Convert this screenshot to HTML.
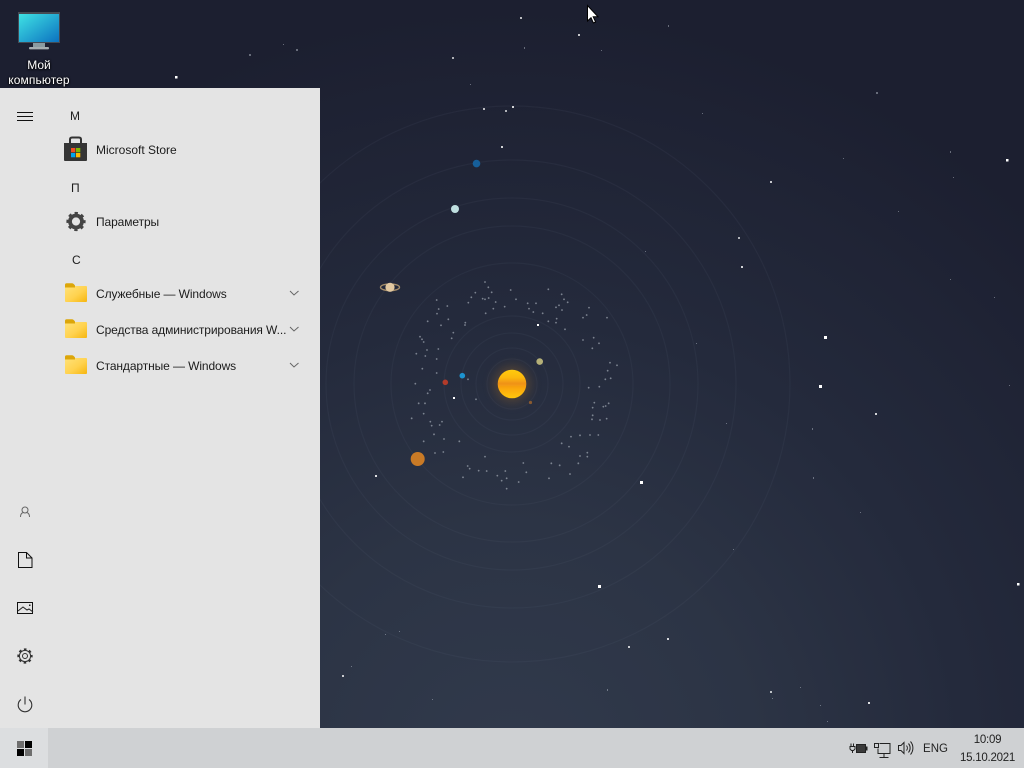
<!DOCTYPE html>
<html><head><meta charset="utf-8"><title>Desktop</title>
<style>
html,body{margin:0;padding:0;width:1024px;height:768px;overflow:hidden;background:#1e2233}
body{position:relative;font-family:"Liberation Sans","Noto Sans CJK SC",sans-serif;font-size:12px;color:#1a1a1a}
.bg{position:absolute;left:0;top:0}
.dt{position:absolute;left:0;width:78px;text-align:center;color:#fff;font-size:12px;line-height:15px;text-shadow:0 0 2px #000,0 1px 2px #000}
.panel{position:absolute;left:0;top:88px;width:320px;height:640px;background:#e4e4e4}
.t{position:absolute;white-space:nowrap;line-height:16px;color:#1c1c1c}
.c{letter-spacing:-.1px}
.abs{position:absolute;left:0;top:0}
.taskbar{position:absolute;left:0;top:728px;width:1024px;height:40px;background:#cfd1d3}
.start{position:absolute;left:0;top:0;width:48px;height:40px;background:#dcdee0}
.s{font-size:11.5px;letter-spacing:-.25px;color:#222}
</style></head><body>
<svg class="bg" width="1024" height="768" viewBox="0 0 1024 768">
<defs>
<radialGradient id="sky" gradientUnits="userSpaceOnUse" cx="512" cy="768" r="760">
<stop offset="0" stop-color="#313a4c"/><stop offset=".32" stop-color="#2c3445"/><stop offset=".6" stop-color="#242a3c"/><stop offset="1" stop-color="#1c1f30"/>
</radialGradient>
<radialGradient id="sun" cx=".5" cy=".5" r=".5"><stop offset="0" stop-color="#f08a10" stop-opacity=".4"/><stop offset=".55" stop-color="#c07a20" stop-opacity=".16"/><stop offset="1" stop-color="#2a3040" stop-opacity="0"/></radialGradient>
<linearGradient id="sb" x1="0" y1="0" x2="0" y2="1"><stop offset="0" stop-color="#ffcb12"/><stop offset=".28" stop-color="#fcb80e"/><stop offset=".48" stop-color="#ef9216"/><stop offset=".68" stop-color="#fbaa0c"/><stop offset="1" stop-color="#ffc70c"/></linearGradient>
<linearGradient id="scr" x1="0" y1="0" x2="1" y2="1"><stop offset="0" stop-color="#3fe2e4"/><stop offset="1" stop-color="#0c72c0"/></linearGradient>
<linearGradient id="fold" x1="0" y1="0" x2="1" y2="1"><stop offset="0" stop-color="#ffe27a"/><stop offset=".55" stop-color="#ffd24f"/><stop offset="1" stop-color="#f6b60f"/></linearGradient>
<filter id="b1" x="-5%" y="-5%" width="110%" height="110%"><feGaussianBlur stdDeviation=".35"/></filter>
<filter id="b2" x="-5%" y="-5%" width="110%" height="110%"><feGaussianBlur stdDeviation=".9"/></filter>
</defs>
<rect width="1024" height="768" fill="url(#sky)"/>
<g fill="none" stroke="#6a7790" stroke-opacity=".09" stroke-width="1.200">
<circle cx="512" cy="384" r="25"/><circle cx="512" cy="384" r="36"/><circle cx="512" cy="384" r="51"/><circle cx="512" cy="384" r="68"/><circle cx="512" cy="384" r="121"/><circle cx="512" cy="384" r="158"/><circle cx="512" cy="384" r="186"/><circle cx="512" cy="384" r="224"/><circle cx="512" cy="384" r="278"/>
</g>
<!-- belt -->
<g transform="translate(370 270) scale(.33333)" fill="none" stroke="#c3cad4" stroke-opacity=".55" stroke-width="5.500" stroke-linecap="round" filter="url(#b2)">
<path d="M345 36h0M355 52h0M365 67h0M316 68h0M304 82h0M338 86h0M345 88h0M356 84h0M295 98h0M377 96h0M404 110h0M370 116h0M347 130h0M232 108h0M206 117h0M201 131h0M200 90h0M235 148h0M173 154h0M213 166h0M286 158h0M285 165h0M250 188h0M245 205h0M150 200h0M156 208h0M161 216h0M205 237h0M171 240h0M139 251h0M166 258h0M200 267h0M157 296h0M200 309h0M136 341h0M173 370h0M180 360h0M146 400h0M165 400h0M161 431h0M125 445h0M181 455h0M216 455h0M209 465h0M185 467h0M192 493h0M161 514h0M222 507h0M268 514h0M195 549h0M220 546h0M345 560h0M293 588h0M299 596h0M326 602h0M350 603h0M279 622h0M382 617h0M406 603h0M410 625h0M395 632h0M446 636h0M410 656h0M469 607h0M460 579h0M544 580h0M569 586h0M537 625h0M600 612h0M625 580h0M630 558h0M652 548h0M652 560h0M575 520h0M597 530h0M603 500h0M630 496h0M660 495h0M685 495h0M710 446h0M690 450h0M666 448h0M668 436h0M668 413h0M673 398h0M700 410h0M707 408h0M716 400h0M656 353h0M688 350h0M722 325h0M706 328h0M741 286h0M720 278h0M713 302h0M687 220h0M671 203h0M667 235h0M639 210h0M711 143h0M657 113h0M650 135h0M639 143h0M593 97h0M582 88h0M575 73h0M567 106h0M558 112h0M576 120h0M560 146h0M558 158h0M535 154h0M585 178h0M535 58h0M473 100h0M477 116h0M490 126h0M498 100h0M518 130h0M422 60h0M438 88h0M294 328h0M318 388h0"/>
</g>
<!-- bright stars -->
<g fill="#fff" filter="url(#b1)">
<rect x="175" y="76" width="2.500" height="2.500"/><rect x="520" y="17" width="2" height="2" opacity=".7"/><rect x="578" y="34" width="2" height="2" opacity=".75"/><rect x="452" y="57" width="2" height="2" opacity=".65"/><rect x="483" y="108" width="2" height="2" opacity=".7"/><rect x="505" y="110" width="2" height="2" opacity=".65"/><rect x="512" y="106" width="2" height="2" opacity=".8"/><rect x="501" y="146" width="2" height="2" opacity=".8"/>
<rect x="1006" y="159" width="2.500" height="2.500"/><rect x="770" y="181" width="2" height="2" opacity=".75"/><rect x="738" y="237" width="2" height="2" opacity=".65"/><rect x="741" y="266" width="2" height="2" opacity=".8"/><rect x="824" y="336" width="3" height="3"/><rect x="819" y="385" width="3" height="3"/><rect x="875" y="413" width="2" height="2" opacity=".8"/><rect x="640" y="481" width="3" height="3"/><rect x="375" y="475" width="2" height="2" opacity=".85"/><rect x="598" y="585" width="3" height="3"/><rect x="628" y="646" width="2" height="2" opacity=".75"/><rect x="667" y="638" width="2" height="2" opacity=".8"/><rect x="342" y="675" width="2" height="2" opacity=".75"/><rect x="770" y="691" width="2" height="2" opacity=".7"/><rect x="868" y="702" width="2" height="2" opacity=".85"/><rect x="1017" y="583" width="2.500" height="2.500"/><rect x="537" y="324" width="2" height="2"/><rect x="453" y="397" width="2" height="2"/>
</g>
<g fill="#c4cad4" opacity=".45">
<rect x="283" y="44" width="1" height="1"/><rect x="296" y="49" width="2" height="2"/><rect x="249" y="54" width="2" height="2"/><rect x="524" y="47" width="1" height="2"/><rect x="601" y="50" width="1" height="1"/><rect x="668" y="25" width="1" height="2"/><rect x="470" y="84" width="1" height="1"/><rect x="702" y="113" width="1" height="1"/><rect x="876" y="92" width="2" height="2"/><rect x="843" y="158" width="1" height="1"/><rect x="950" y="151" width="1" height="2"/><rect x="953" y="177" width="1" height="1"/><rect x="898" y="211" width="1" height="1"/><rect x="950" y="279" width="1" height="1"/><rect x="994" y="297" width="1" height="1"/><rect x="812" y="428" width="1" height="2"/><rect x="813" y="477" width="1" height="2"/><rect x="860" y="512" width="1" height="1"/><rect x="726" y="423" width="1" height="1"/><rect x="1009" y="385" width="1" height="1"/><rect x="607" y="689" width="1" height="2"/><rect x="432" y="699" width="1" height="1"/><rect x="351" y="666" width="1" height="1"/><rect x="385" y="634" width="1" height="1"/><rect x="399" y="631" width="1" height="1"/><rect x="772" y="698" width="1" height="1"/><rect x="800" y="687" width="1" height="1"/><rect x="820" y="705" width="1" height="1"/><rect x="827" y="721" width="1" height="1"/><rect x="696" y="343" width="1" height="1"/><rect x="645" y="251" width="1" height="1"/><rect x="733" y="549" width="1" height="1"/></g>
<!-- planets -->
<circle cx="512" cy="384" r="30" fill="url(#sun)"/>
<circle cx="512" cy="384" r="14.300" fill="url(#sb)" filter="url(#b1)"/>
<circle cx="530.500" cy="402.500" r="1.600" fill="#8a5a30"/>
<circle cx="539.700" cy="361.600" r="3.300" fill="#b5b078" filter="url(#b1)"/>
<circle cx="462.300" cy="375.700" r="2.800" fill="#1e93cf" filter="url(#b1)"/>
<circle cx="445.300" cy="382.300" r="2.800" fill="#b23a2c" filter="url(#b1)"/>
<circle cx="417.700" cy="459" r="7" fill="#c97a28" filter="url(#b1)"/>
<ellipse cx="390" cy="287.300" rx="9.500" ry="3.400" fill="none" stroke="#a58d6a" stroke-width="1.400" filter="url(#b1)"/>
<circle cx="390" cy="287.300" r="4.600" fill="#e2c8a0" filter="url(#b1)"/>
<circle cx="455" cy="209" r="4" fill="#bfdfe0" filter="url(#b1)"/>
<circle cx="476.500" cy="163.600" r="3.800" fill="#145f9a" filter="url(#b1)"/>
</svg>

<!-- desktop icon -->
<svg class="abs" width="78" height="56">
<rect x="33" y="43" width="12" height="5" fill="#8a9aa0"/>
<rect x="29" y="47" width="20" height="2.400" rx="1" fill="#a5adb0"/>
<rect x="18" y="12" width="42" height="31" fill="#454b54"/>
<rect x="19" y="14" width="40" height="28" fill="url(#scr)"/>
</svg>
<div class="dt" style="top:58px">Мой</div>
<div class="dt" style="top:73px;letter-spacing:.1px">компьютер</div>

<div class="panel"></div>
<div class="t" style="left:70px;top:108px">М</div>
<div class="t" style="left:71px;top:180px">П</div>
<div class="t" style="left:72px;top:252px">С</div>
<div class="t" style="left:96px;top:142px">Microsoft Store</div>
<div class="t c" style="left:96px;top:214px">Параметры</div>
<div class="t c" style="left:96px;top:286px">Служебные — Windows</div>
<div class="t c" style="left:96px;top:322px">Средства администрирования W...</div>
<div class="t c" style="left:96px;top:358px">Стандартные — Windows</div>

<svg class="abs" width="320" height="728">
<!-- hamburger -->
<path d="M17 112.500h16M17 116.500h16M17 120.500h16" stroke="#111" stroke-width="1" fill="none"/>
<!-- store -->
<path d="M70 144v-4.500q0-2 2-2h7q2 0 2 2v4.500" fill="none" stroke="#333" stroke-width="2"/>
<path d="M64 143h23v17q0 1-1 1h-21q-1 0-1-1z" fill="#353535"/>
<rect x="71" y="148" width="4.300" height="4.300" fill="#f25022"/><rect x="76" y="148" width="4.300" height="4.300" fill="#7fba00"/><rect x="71" y="153" width="4.300" height="4.300" fill="#00a4ef"/><rect x="76" y="153" width="4.300" height="4.300" fill="#ffb900"/>
<!-- gear -->
<g transform="translate(76 221.500)"><circle r="6" fill="none" stroke="#444" stroke-width="3.800"/><circle r="8.200" fill="none" stroke="#444" stroke-width="2.800" stroke-dasharray="3.200 3.240" stroke-dashoffset="1.600"/></g>
<!-- folders -->
<g><rect x="65" y="286" width="22" height="16" rx="1" fill="url(#fold)"/><path d="M65 287.500v-2.500q0-1.700 1.700-1.700h5.300q1.300 0 3 2.200v2z" fill="#dca60a"/></g>
<g transform="translate(0 36)"><rect x="65" y="286" width="22" height="16" rx="1" fill="url(#fold)"/><path d="M65 287.500v-2.500q0-1.700 1.700-1.700h5.300q1.300 0 3 2.200v2z" fill="#dca60a"/></g>
<g transform="translate(0 72)"><rect x="65" y="286" width="22" height="16" rx="1" fill="url(#fold)"/><path d="M65 287.500v-2.500q0-1.700 1.700-1.700h5.300q1.300 0 3 2.200v2z" fill="#dca60a"/></g>
<!-- chevrons -->
<path d="M290 291l4 4 4.500-4M290 327l4 4 4.500-4M290 363l4 4 4.500-4" fill="none" stroke="#666" stroke-width="1"/>
<!-- user -->
<g fill="none" stroke="#666" stroke-width="1"><circle cx="25" cy="510" r="3"/><path d="M20.500 517q0-4 3-4.500M29.500 517q0-4-3-4.500"/></g>
<!-- doc -->
<path d="M18.500 552.500h8l5.500 5.500v9.500h-13.500zM26.500 552.500v5.500h5.500" fill="none" stroke="#111" stroke-width="1"/>
<!-- pictures -->
<path d="M17.500 602.500h15v11h-15z" fill="none" stroke="#111" stroke-width="1"/>
<path d="M18 611l5-4 4 3 2-1 4 3" fill="none" stroke="#222" stroke-width="1"/><rect x="29" y="604.500" width="1.500" height="1.500" fill="#222"/>
<!-- settings -->
<g transform="translate(25 656)" fill="none" stroke="#333"><circle r="2.500"/><circle r="5.600" stroke-width="1"/><circle r="6.700" stroke-width="1.900" stroke-dasharray="2.600 2.660" stroke-dashoffset="1.300"/></g>
<!-- power -->
<path d="M21 699.500a6.800 6.800 0 1 0 8 0M25 696.500v8" fill="none" stroke="#333" stroke-width="1.100"/>
</svg>

<div class="taskbar"><div class="start"></div>
<div class="t" style="left:895.500px;top:12.500px;width:80px;text-align:center;color:#222;font-size:11.500px">ENG</div>
<div class="t s" style="left:947.500px;top:3.500px;width:80px;text-align:center">10:09</div>
<div class="t s" style="left:947.500px;top:21.500px;width:80px;text-align:center">15.10.2021</div>
</div>
<svg class="abs" width="1024" height="768">
<!-- start logo -->
<rect x="17" y="741" width="7" height="7" fill="#6e6e6e"/><rect x="25" y="741" width="7" height="7" fill="#000"/><rect x="17" y="749" width="7" height="7" fill="#000"/><rect x="25" y="749" width="7" height="7" fill="#6e6e6e"/>
<!-- battery -->
<g fill="none" stroke="#222"><path d="M851 746v-2.500M853.500 746v-2.500M850 746.500h5v2.500l-1.500 1.500h-2l-1.500-1.500zM852.500 751v2"/></g>
<rect x="856.500" y="744.500" width="9" height="8" fill="#3a3a3a" stroke="#222"/><rect x="866" y="746.500" width="1.500" height="4" fill="#222"/>
<!-- network -->
<g fill="none" stroke="#222" stroke-width="1"><path d="M879.500 743.500h10.500v10h-12v-5"/><path d="M884 754v3M879.500 757.500h9"/><rect x="874.500" y="743.500" width="4" height="4"/></g>
<!-- volume -->
<g fill="none" stroke="#222" stroke-width="1"><path d="M898.500 745.500v5h2.500l3 3v-11l-3 3z"/><path d="M906.500 745.500a4 4 0 0 1 0 5M908.500 743.500a7 7 0 0 1 0 9M910.500 741.500a10 10 0 0 1 0 13"/></g>
<!-- cursor -->
<path d="M587.500 5.500v15.500l3.500-3.300 2.400 5.300 2.200-1-2.400-5.200h4.800z" fill="#fff" stroke="#000" stroke-width="1"/>
</svg>
</body></html>
